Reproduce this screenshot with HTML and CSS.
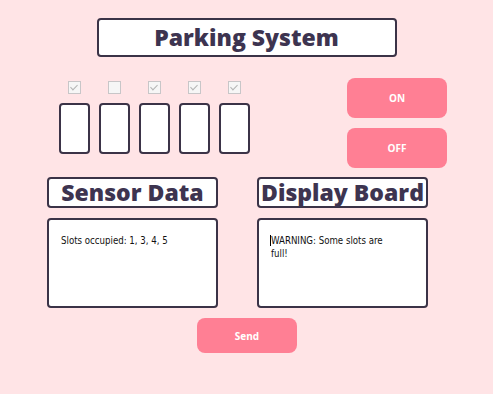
FILE: index.html
```html
<!DOCTYPE html>
<html>
<head>
<meta charset="utf-8">
<link rel="stylesheet" href="styles.css">
</head>
<body>
<div class="page">
  <header class="title-row">
    <h1 class="title">Parking System</h1>
  </header>
  <section class="controls">
    <div class="slots">
      <div class="slot-col"><span class="check on"></span><div class="slot"></div></div>
      <div class="slot-col"><span class="check"></span><div class="slot"></div></div>
      <div class="slot-col"><span class="check on"></span><div class="slot"></div></div>
      <div class="slot-col"><span class="check on"></span><div class="slot"></div></div>
      <div class="slot-col"><span class="check on"></span><div class="slot"></div></div>
    </div>
    <div class="power">
      <button class="btn big">ON</button>
      <button class="btn big">OFF</button>
    </div>
  </section>
  <section class="panels">
    <div class="panel">
      <h2 class="panel-title">Sensor Data</h2>
      <div class="textbox">Slots occupied: 1, 3, 4, 5</div>
    </div>
    <div class="panel">
      <h2 class="panel-title">Display Board</h2>
      <div class="textbox"><span class="caret"></span>WARNING: Some slots are full!</div>
    </div>
  </section>
  <div class="send-row"><button class="btn send">Send</button></div>
</div>
</body>
</html>
```
FILE: styles.css
```css
html, body { margin: 0; padding: 0; }
body {
  background: #ffe4e6;
  width: 493px;
  height: 394px;
  overflow: hidden;
  font-family: "Open Sans", "DejaVu Sans", sans-serif;
  color: #3d3450;
}
.page { display: flex; flex-direction: column; }
.title-row { display: flex; justify-content: center; padding-top: 18px; }
.title {
  margin: 0;
  box-sizing: border-box;
  width: 300px;
  height: 39px;
  border: 2px solid #3b3347;
  border-radius: 4px;
  background: #fff;
  font-size: 23px;
  font-weight: 800;
  line-height: 35px;
  text-align: center;
  color: #3d3450;
}
.controls {
  display: flex;
  justify-content: space-between;
  padding: 21px 46px 0 59px;
}
.slots { display: flex; gap: 9px; padding-top: 3px; }
.slot-col { display: flex; flex-direction: column; align-items: center; gap: 9px; width: 31px; }
.check {
  box-sizing: border-box;
  width: 13px; height: 13px;
  border: 1px solid #c8c6c8;
  background: #f6f6f6;
  position: relative;
}
.check.on::after {
  content: "";
  position: absolute;
  left: 3px; top: 1px;
  width: 3px; height: 6px;
  border-right: 1.3px solid #b4b4b4;
  border-bottom: 1.3px solid #b4b4b4;
  transform: rotate(45deg);
}
.slot {
  box-sizing: border-box;
  width: 31px; height: 51px;
  border: 2px solid #3b3347;
  border-radius: 4px;
  background: #fff;
}
.power { display: flex; flex-direction: column; gap: 10px; }
.btn {
  border: none;
  background: #ff7f94;
  color: #fff;
  font-family: "Open Sans", sans-serif;
  font-weight: 700;
  font-size: 10px;
  border-radius: 8px;
  padding: 0;
  width: 100px;
}
.big { height: 40px; }
.panels {
  display: flex;
  gap: 39px;
  padding: 9px 0 0 47px;
}
.panel { display: flex; flex-direction: column; gap: 10px; width: 171px; }
.panel-title {
  margin: 0;
  box-sizing: border-box;
  height: 31px;
  border: 2px solid #3b3347;
  border-radius: 4px;
  background: #fff;
  font-size: 23px;
  font-weight: 800;
  line-height: 27px;
  text-align: center;
  white-space: nowrap;
  overflow: visible;
  display: flex;
  justify-content: center;
  color: #3d3450;
}
.textbox {
  box-sizing: border-box;
  height: 90px;
  border: 2px solid #3b3347;
  border-radius: 4px;
  background: #fff;
  padding: 14px 26px 0 12px;
  font-family: "DejaVu Sans Condensed", "DejaVu Sans", sans-serif;
  font-stretch: condensed;
  font-size: 9.6px;
  line-height: 13px;
  color: #111;
}
.caret { display: inline-block; width: 1px; height: 11px; background: #000; vertical-align: -2px; margin-left: -1px; }
.send-row { display: flex; justify-content: center; padding-top: 10px; padding-left: 1px; }
.send { height: 35px; }
```
